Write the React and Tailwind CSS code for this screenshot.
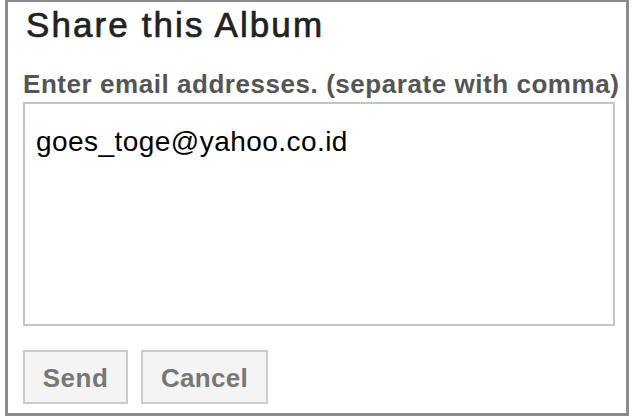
import React, { useState } from 'react';

export default function App() {
    const [emails, setEmails] = useState('goes_toge@yahoo.co.id');

    return (
        <div className="w-[633px] h-[420px] bg-white font-['Liberation_Sans',Arial,sans-serif]">
            {/* Dialog bagikan album */}
            <div className="ml-[5px] w-[624px] h-[416px] border-[3px] border-t-2 border-[#8c8c8c] bg-white pl-[15px]">
                <h1 className="pl-[3px] pt-[2px] text-[35px] leading-[41px] text-[#222] tracking-[2.1px] [-webkit-text-stroke:0.7px_#222]">
                    Share this Album
                </h1>

                <label className="block mt-[23px] text-[26px] leading-[32px] font-bold text-[#555] tracking-[0.55px]">
                    Enter email addresses. (separate with comma)
                </label>

                <textarea
                    value={emails}
                    onChange={e => setEmails(e.target.value)}
                    className="block mt-[2px] w-[592px] h-[224px] resize-none border-2 border-[#c4c4c4] bg-white pl-[11px] pt-[21px] text-[28px] leading-[34px] text-black tracking-[0.45px] outline-none"
                />

                <div className="flex gap-[13px] mt-[24px]">
                    <button className="w-[105px] h-[54px] border-2 border-[#cbcbcb] bg-[#f4f4f4] pt-[3px] text-[26px] font-bold text-[#777] tracking-[0.5px]">
                        Send
                    </button>
                    <button className="w-[127px] h-[54px] border-2 border-[#cbcbcb] bg-[#f4f4f4] pt-[3px] text-[26px] font-bold text-[#777] tracking-[0.3px]">
                        Cancel
                    </button>
                </div>
            </div>
        </div>
    );
}
